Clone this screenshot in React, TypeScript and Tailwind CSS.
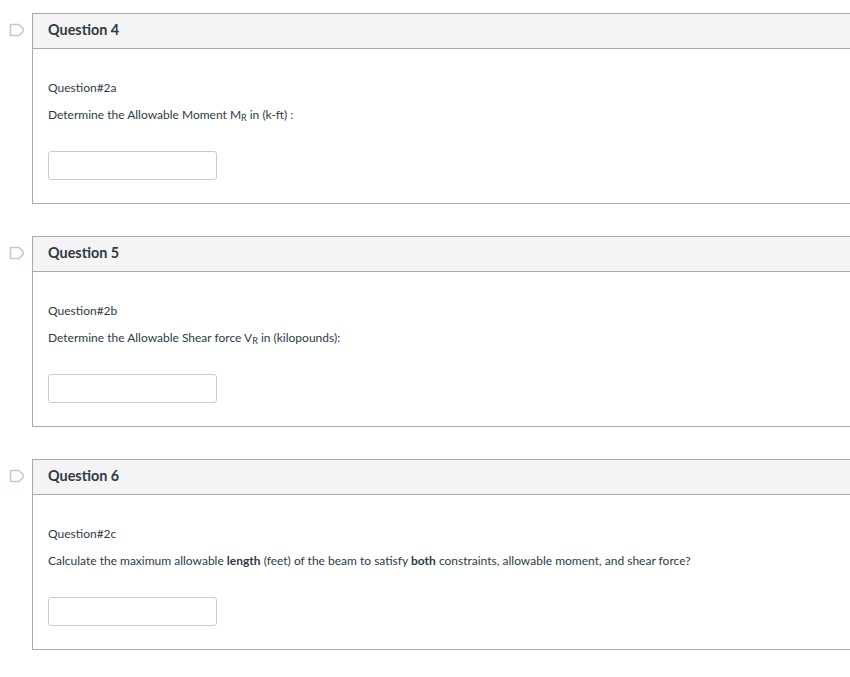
import React from "react";

function FlagIcon() {
  return (
    <svg width="16" height="14" viewBox="0 0 16 14" fill="none">
      <path
        d="M1.5 1.5 H10 L14 5.5 V8.5 L10 12.5 H1.5 Z"
        stroke="#bccbdb"
        strokeWidth="1.6"
        strokeLinejoin="round"
      />
    </svg>
  );
}

function Sub({ children }: { children: React.ReactNode }) {
  return <sub className="text-[9px] relative top-[2px]">{children}</sub>;
}

interface QuestionProps {
  title: string;
  label: string;
  prompt: React.ReactNode;
}

function Question({ title, label, prompt }: QuestionProps) {
  return (
    <div className="flex">
      <div className="w-[32px] shrink-0 pt-[10px] pl-[9px]">
        <FlagIcon />
      </div>
      <div className="w-[830px] shrink-0 border border-[#aaaaaa] border-r-0">
        <div className="h-[35px] bg-[#f4f4f4] border-b border-[#aaaaaa] flex items-center pl-[15px] pb-[3px]">
          <span className="text-[14.4px] font-bold text-[#2d3b45]">{title}</span>
        </div>
        <div className="pt-[30px] pb-[23px] px-[15px] text-[12px] text-[#2d3b45]">
          <p className="leading-[18px]">{label}</p>
          <p className="leading-[18px] mt-[9px]">{prompt}</p>
          <input
            type="text"
            className="mt-[27px] block w-[169px] h-[29px] border border-[#c7cdd1] rounded-[3px] bg-white"
          />
        </div>
      </div>
    </div>
  );
}

export default function App() {
  return (
    <div
      className="w-[850px] h-[677px] overflow-hidden bg-white pt-[13px] flex flex-col gap-[32px]"
      style={{ fontFamily: "Lato, 'Liberation Sans', sans-serif" }}
    >
      <Question
        title="Question 4"
        label="Question#2a"
        prompt={
          <>
            Determine the Allowable Moment M<Sub>R</Sub> in (k-ft) :
          </>
        }
      />
      <Question
        title="Question 5"
        label="Question#2b"
        prompt={
          <>
            Determine the Allowable Shear force V<Sub>R</Sub> in (kilopounds):
          </>
        }
      />
      <Question
        title="Question 6"
        label="Question#2c"
        prompt={
          <>
            Calculate the maximum allowable <strong>length</strong> (feet) of the beam to satisfy{" "}
            <strong>both</strong> constraints, allowable moment, and shear force?
          </>
        }
      />
    </div>
  );
}
